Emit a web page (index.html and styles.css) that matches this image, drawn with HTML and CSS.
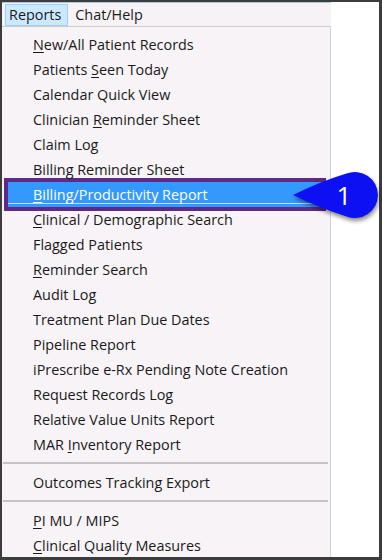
FILE: index.html
```html
<!DOCTYPE html>
<html>
<head>
<meta charset="utf-8">
<link rel="stylesheet" href="styles.css">
</head>
<body>
<div class="frame">
  <div class="menubar">
    <span class="top active">Reports</span>
    <span class="top">Chat/Help</span>
  </div>
  <div class="panel">
    <div class="item"><u>N</u>ew/All Patient Records</div>
    <div class="item">Patients <u>S</u>een Today</div>
    <div class="item">Calendar Quick View</div>
    <div class="item">Clinician <u>R</u>eminder Sheet</div>
    <div class="item">Claim Log</div>
    <div class="item">Billing Reminder Sheet</div>
    <div class="item hl"><u>B</u>illing/Productivity Report</div>
    <div class="item"><u>C</u>linical / Demographic Search</div>
    <div class="item">Flagged Patients</div>
    <div class="item"><u>R</u>eminder Search</div>
    <div class="item">Audit Log</div>
    <div class="item">Treatment Plan Due Dates</div>
    <div class="item">Pipeline Report</div>
    <div class="item">iPrescribe e-Rx Pending Note Creation</div>
    <div class="item">Request Records Log</div>
    <div class="item">Relative Value Units Report</div>
    <div class="item">MAR <u>I</u>nventory Report</div>
    <div class="sep"></div>
    <div class="item">Outcomes Tracking Export</div>
    <div class="sep"></div>
    <div class="item"><u>P</u>I MU / MIPS</div>
    <div class="item"><u>C</u>linical Quality Measures</div>
  </div>
</div>
<svg class="callout" width="102" height="62" viewBox="280 166 102 62" xmlns="http://www.w3.org/2000/svg">
  <defs>
    <filter id="sh" x="-20%" y="-20%" width="150%" height="160%">
      <feGaussianBlur stdDeviation="2"/>
    </filter>
  </defs>
  <path d="M293,195 Q322,181 346.5,173.6 A23,23 0 1,1 346.5,216.4 Q322,209 293,195 Z" fill="#000" opacity="0.45" filter="url(#sh)" transform="translate(1,3)"/>
  <path d="M293,195 Q322,181 346.5,173.6 A23,23 0 1,1 346.5,216.4 Q322,209 293,195 Z" fill="#0c10f2"/>
  <text x="344" y="205" text-anchor="middle" class="num">1</text>
</svg>
</body>
</html>
```
FILE: styles.css
```css
html, body {
  margin: 0;
  padding: 0;
}
body {
  background: #3c3c3c;
  width: 382px;
  height: 560px;
  padding: 2px 3px 3px 2px;
  box-sizing: border-box;
  position: relative;
  font-family: "Open Sans", "Noto Sans", sans-serif;
  font-size: 14.4px;
  color: #1a1a1a;
}
.frame {
  width: 377px;
  height: 555px;
  background: #ffffff;
  display: flex;
  flex-direction: column;
  align-items: flex-start;
  overflow: hidden;
}
.menubar {
  width: 329px;
  height: 25px;
  box-sizing: border-box;
  border-top: 1px solid #a9c6e3;
  border-bottom: 1px solid #cfcacf;
  background: #f6f2f6;
  display: flex;
  align-items: stretch;
  padding: 1px 0 0 3px;
  gap: 3px;
}
.top {
  display: flex;
  align-items: center;
  padding: 0 6px 1px 3px;
  border: 1px solid transparent;
}
.top.active {
  background: #cce8ff;
  border-color: #99d1ff;
}
.panel {
  width: 328px;
  flex: 1;
  background: #f7f3f7;
  border-right: 1px solid #d4d0d4;
  padding-top: 5px;
  box-sizing: content-box;
}
.item {
  height: 25px;
  line-height: 25px;
  padding-left: 31px;
  white-space: nowrap;
}
.item u {
  text-decoration-thickness: 1px;
  text-underline-offset: 2px;
}
.item.hl {
  margin: 0 8px 0 6px;
  padding-left: 25px;
  color: #ffffff;
  background: linear-gradient(#3399ff 0, #3399ff 21px, #bfe0ff 21px, #bfe0ff 22px, #3399ff 22px);
  box-shadow: 0 0 0 4px #5e2a86;
}
.sep {
  height: 2px;
  margin: 5px 2px 6px 1px;
  background: #c6c2c6;
}
.callout {
  position: absolute;
  left: 280px;
  top: 166px;
}
.num {
  font-family: "Open Sans", "Noto Sans", sans-serif;
  font-size: 26px;
  fill: #ffffff;
}
```
